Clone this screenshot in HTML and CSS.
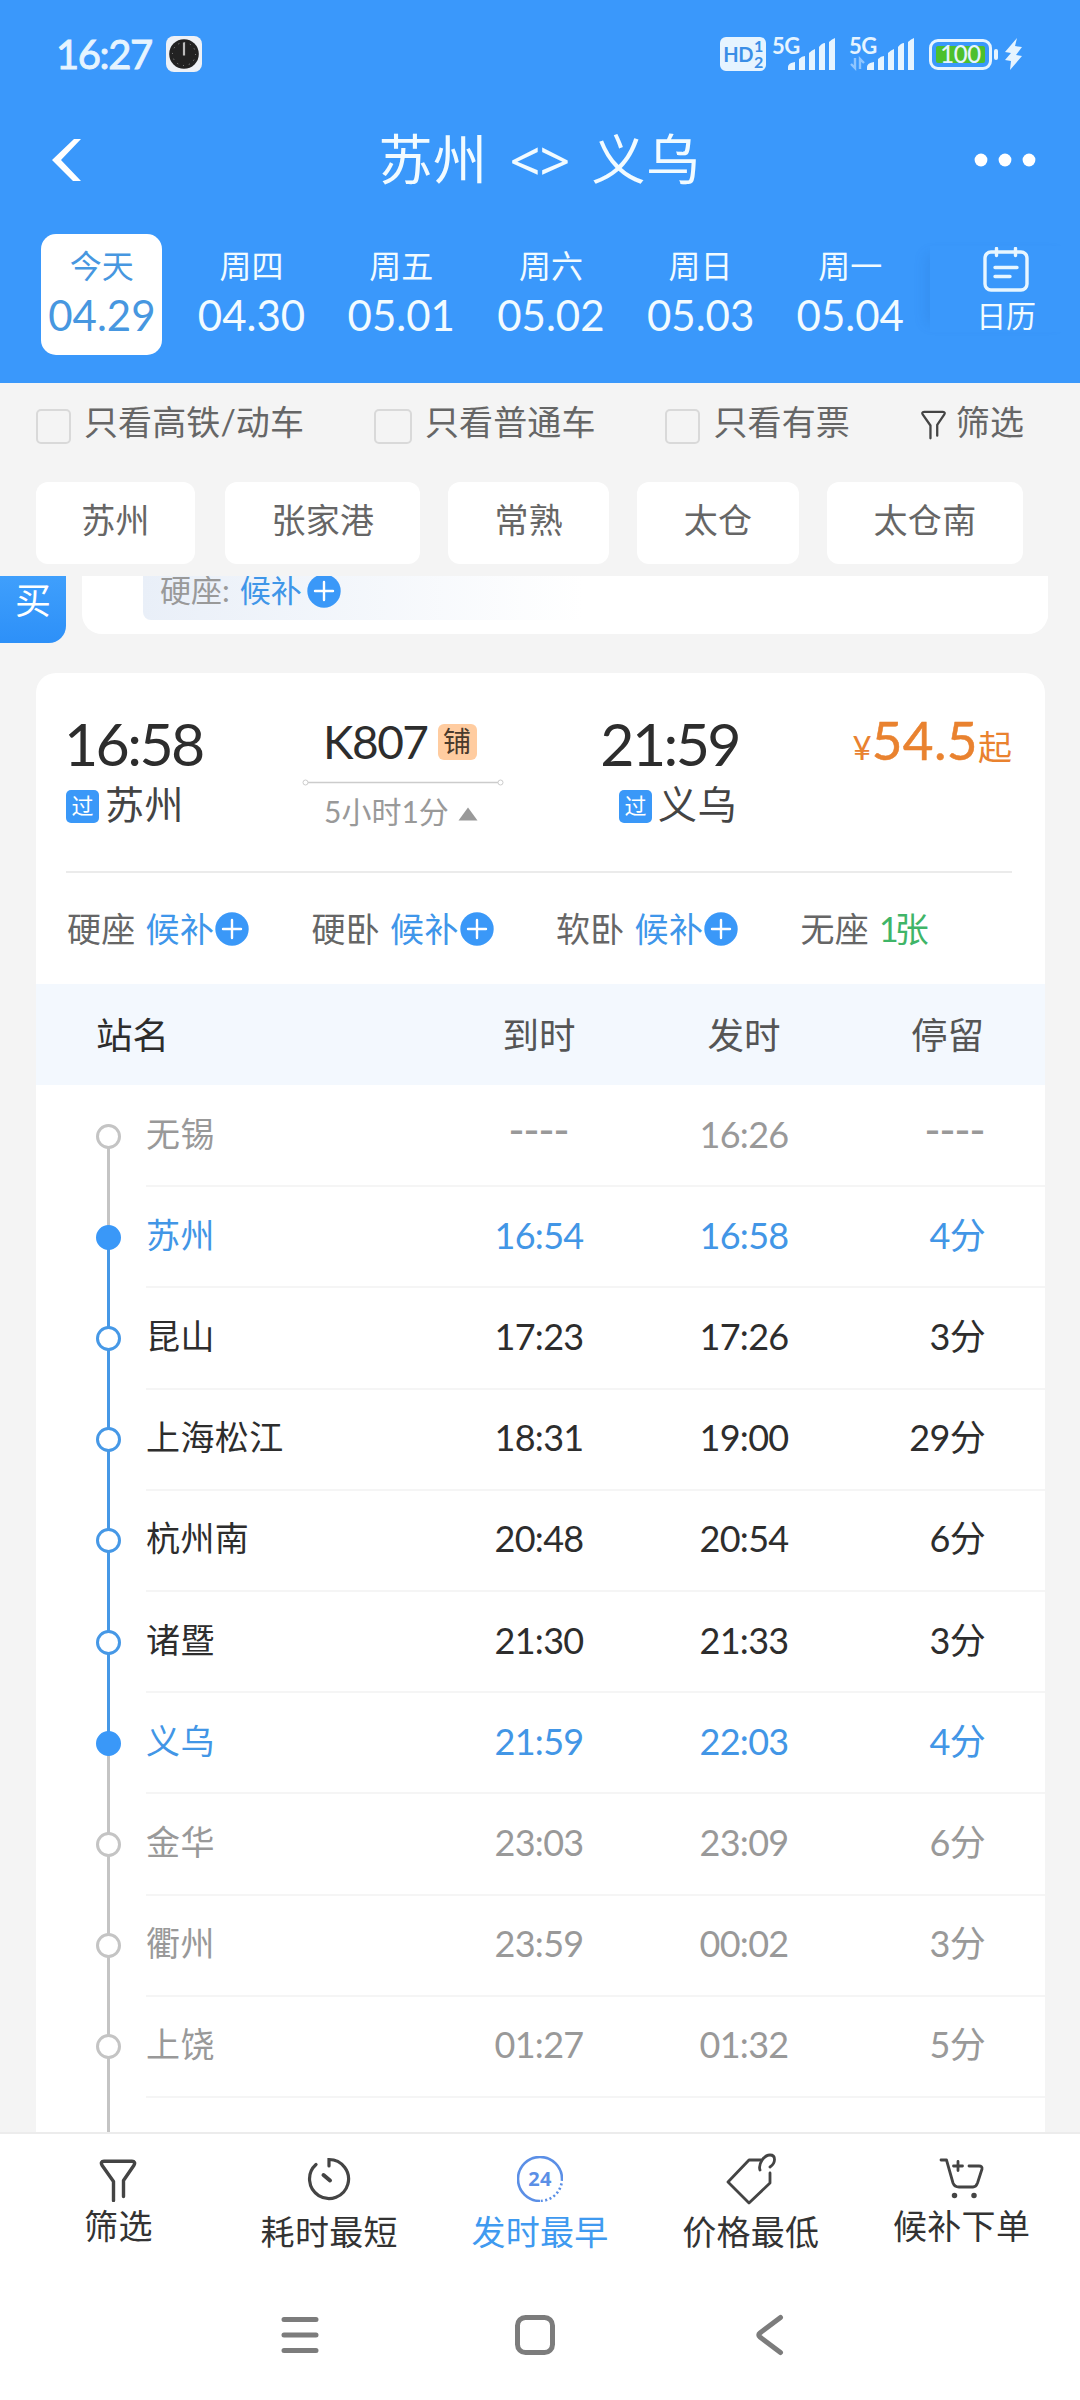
FILE: index.html
```html
<!DOCTYPE html>
<html lang="zh-CN">
<head>
<meta charset="utf-8">
<title>苏州 - 义乌</title>
<link rel="stylesheet" href="styles.css">
</head>
<body>
<svg class="defs" width="0" height="0">
  <symbol id="plus" viewBox="0 0 34 34"><circle cx="17" cy="17" r="16.7" fill="#3a98f8"/><path d="M17 8v18M8 17h18" stroke="#fff" stroke-width="2.4" stroke-linecap="round"/></symbol>
  <symbol id="funnel" viewBox="0 0 40 44"><path d="M15.500 42.500V23.500L4.200 7.500C2.600 5.200 3.400 3.200 6 3.200H34C36.600 3.200 37.400 5.200 35.800 7.500L25.500 22.500V38.500" fill="none" stroke="currentColor" stroke-width="3.400" stroke-linecap="round" stroke-linejoin="round"/></symbol>
</svg>

<header class="header">
  <div class="status">
    <span class="clock">16:27</span>
    <svg class="app-icon" width="36" height="36" viewBox="0 0 36 36"><rect width="36" height="36" rx="8" fill="#eef1f6"/><circle cx="18" cy="18" r="14.800" fill="#222"/><circle cx="18" cy="18" r="11.500" fill="none" stroke="#999" stroke-width="1" stroke-dasharray="1 5"/><path d="M18 6.500v13" stroke="#bbb" stroke-width="2.200"/></svg>
    <span class="hd"><span>HD</span><span class="hd-sim"><i>1</i><i>2</i></span></span>
    <span class="signal"><b>5G</b><svg width="64" height="34" viewBox="0 0 64 34"><g fill="#e6f4ff"><path d="M16 33v-3q0-4 7-5v8zM27 33V22q3-3 6-3v14zM37 33V16q3-3 6-4v21zM47 33V10q3-4 6-4v27zM57 33V5q3-3 6-4v32z"/></g></svg></span>
    <span class="signal second"><b>5G</b><svg width="66" height="34" viewBox="-2 0 66 34"><g fill="#e6f4ff"><path d="M16 33v-3q0-4 7-5v8zM27 33V22q3-3 6-3v14zM37 33V16q3-3 6-4v21zM47 33V10q3-4 6-4v27zM57 33V5q3-3 6-4v32z"/></g><path d="M4 21v10l-4-4M9 32V22l4 4" fill="none" stroke="#8fc6ff" stroke-width="2.400"/></svg></span>
    <span class="battery"><span class="level">100</span></span><span class="battery-tip"></span>
    <svg class="bolt" width="19" height="32" viewBox="0 0 19 32"><path d="M13 0L1 14l6 1-6 7 6 1-1 9L18 18l-6-1 6-8-7-1z" fill="#e6f4ff"/></svg>
  </div>
  <div class="titlebar">
    <svg class="back" width="32" height="44" viewBox="0 0 32 44"><path d="M30 1H23L1 22L22 43H30L10 22Z" fill="#fff"/></svg>
    <h1>苏州 <span>&lt;&gt;</span> 义乌</h1>
    <svg class="more" width="64" height="14" viewBox="0 0 64 14"><g fill="#fff"><circle cx="8" cy="7" r="6.400"/><circle cx="32" cy="7" r="6.400"/><circle cx="56" cy="7" r="6.400"/></g></svg>
  </div>
  <div class="dates">
    <div class="date active"><span>今天</span><b>04.29</b></div>
    <div class="date"><span>周四</span><b>04.30</b></div>
    <div class="date"><span>周五</span><b>05.01</b></div>
    <div class="date"><span>周六</span><b>05.02</b></div>
    <div class="date"><span>周日</span><b>05.03</b></div>
    <div class="date"><span>周一</span><b>05.04</b></div>
    <div class="calendar">
      <svg width="46" height="46" viewBox="0 0 46 46" fill="none" stroke="#e8f6ff" stroke-width="3.400" stroke-linecap="round"><rect x="2" y="5" width="42" height="38" rx="6"/><path d="M13.500 1.500v7M32.500 1.500v7M12 20.500h22M12 29.500h15"/></svg>
      <span>日历</span>
    </div>
  </div>
</header>

<section class="filters">
  <label><i class="box"></i>只看高铁/动车</label>
  <label><i class="box wide"></i>只看普通车</label>
  <label><i class="box"></i>只看有票</label>
  <span class="filter-btn"><svg width="27" height="31"><use href="#funnel"/></svg>筛选</span>
</section>
<section class="chips">
  <span class="chip c1">苏州</span><span class="chip c2">张家港</span><span class="chip c3">常熟</span><span class="chip c4">太仓</span><span class="chip c5">太仓南</span>
</section>

<main class="list">
  <div class="previous">
    <span class="buy">买</span>
    <div class="prev-card"><div class="prev-seat">硬座:<em>候补</em><svg width="34" height="34"><use href="#plus"/></svg></div></div>
  </div>

  <article class="train">
    <div class="summary">
      <div class="end from"><b class="time">16:58</b><span class="place"><i class="pass">过</i>苏州</span></div>
      <div class="number">
        <div class="code">K807<i class="bed">铺</i></div>
        <svg class="track" width="202" height="7" viewBox="0 0 202 7" fill="#fff" stroke="#ccc"><path d="M5 3.500h192" stroke-width="1.500"/><circle cx="3.500" cy="3.500" r="2.500"/><circle cx="198.500" cy="3.500" r="2.500"/></svg>
        <div class="duration">5小时1分<svg width="20" height="14" viewBox="0 0 20 14"><path d="M10 0.500L19.500 13.500H0.500Z" fill="#999"/></svg></div>
      </div>
      <div class="end to"><b class="time">21:59</b><span class="place"><i class="pass">过</i>义乌</span></div>
      <div class="price"><small>¥</small><b>54.5</b><span>起</span></div>
    </div>
    <div class="seats">
      <span>硬座<em>候补</em><svg width="34" height="34"><use href="#plus"/></svg></span>
      <span>硬卧<em>候补</em><svg width="34" height="34"><use href="#plus"/></svg></span>
      <span>软卧<em>候补</em><svg width="34" height="34"><use href="#plus"/></svg></span>
      <span>无座<em class="left">1张</em></span>
    </div>
    <div class="row head"><span class="station">站名</span><span>到时</span><span>发时</span><span class="stay">停留</span></div>
    <div class="stops">
      <div class="row stop out first"><i class="dot"></i><span class="station">无锡</span><span class="dash">----</span><span>16:26</span><span class="stay dash">----</span></div>
      <div class="row stop mine board"><i class="dot"></i><span class="station">苏州</span><span>16:54</span><span>16:58</span><span class="stay">4分</span></div>
      <div class="row stop"><i class="dot"></i><span class="station">昆山</span><span>17:23</span><span>17:26</span><span class="stay">3分</span></div>
      <div class="row stop"><i class="dot"></i><span class="station">上海松江</span><span>18:31</span><span>19:00</span><span class="stay">29分</span></div>
      <div class="row stop"><i class="dot"></i><span class="station">杭州南</span><span>20:48</span><span>20:54</span><span class="stay">6分</span></div>
      <div class="row stop"><i class="dot"></i><span class="station">诸暨</span><span>21:30</span><span>21:33</span><span class="stay">3分</span></div>
      <div class="row stop mine leave"><i class="dot"></i><span class="station">义乌</span><span>21:59</span><span>22:03</span><span class="stay">4分</span></div>
      <div class="row stop out"><i class="dot"></i><span class="station">金华</span><span>23:03</span><span>23:09</span><span class="stay">6分</span></div>
      <div class="row stop out"><i class="dot"></i><span class="station">衢州</span><span>23:59</span><span>00:02</span><span class="stay">3分</span></div>
      <div class="row stop out"><i class="dot"></i><span class="station">上饶</span><span>01:27</span><span>01:32</span><span class="stay">5分</span></div>
      <div class="row stop out tail"></div>
    </div>
  </article>
</main>

<nav class="tabs">
  <div class="tab raised"><svg width="40" height="44"><use href="#funnel"/></svg><span>筛选</span></div>
  <div class="tab"><svg width="46" height="46" viewBox="0 0 46 46" fill="none" stroke="currentColor" stroke-width="3.200" stroke-linecap="round"><path d="M10 8.500A19.500 19.500 0 1 0 23 3.500V10"/><path d="M17.500 19L24 24.500" stroke-width="4"/></svg><span>耗时最短</span></div>
  <div class="tab current"><svg width="46" height="46" viewBox="0 0 46 46" fill="none" stroke="#5b8fe6" stroke-width="2.600"><path d="M23 45A22 22 0 1 1 45 23"/><path d="M45 23A22 22 0 0 1 23 45" stroke-dasharray="2 2.500"/><text x="23" y="29.500" text-anchor="middle" class="num24">24</text></svg><span>发时最早</span></div>
  <div class="tab"><svg class="tag" width="52" height="52" viewBox="0 0 52 52" fill="none" stroke="currentColor" stroke-width="2.800" stroke-linecap="round" stroke-linejoin="round"><path d="M36 7H24L3 29L24 50L45 30V20"/><path d="M35 17C33 11 39 2 45 2C51 2 51 10 45 14"/></svg><span>价格最低</span></div>
  <div class="tab raised"><svg width="46" height="42" viewBox="0 0 46 42" fill="none" stroke="currentColor" stroke-width="2.800" stroke-linecap="round" stroke-linejoin="round"><path d="M2 2H7.500L14 25Q15.500 29 20 29H34Q37 29 38.500 25L43 11Q43.500 8 40 8H30M19 3.500v9M14.500 8h9"/><circle cx="15.500" cy="37.500" r="2" fill="currentColor" stroke-width="1.500"/><circle cx="35" cy="37.500" r="2" fill="currentColor" stroke-width="1.500"/></svg><span>候补下单</span></div>
</nav>
<footer class="sysnav">
  <svg width="40" height="42" viewBox="0 0 40 42"><path d="M4 5.500h32M4 21h32M4 36.500h32"/></svg>
  <svg width="42" height="42" viewBox="0 0 42 42"><rect x="3.500" y="3.500" width="35" height="35" rx="8"/></svg>
  <svg width="30" height="42" viewBox="0 0 30 42"><path d="M25.500 3.500L5 19Q2.500 21 5 23L25.500 38.500"/></svg>
</footer>
</body>
</html>
```
FILE: styles.css
```css
* { box-sizing: border-box; }
body {
  margin: 0;
  width: 1080px;
  height: 2400px;
  overflow: hidden;
  display: flex;
  flex-direction: column;
  background: #f4f4f4;
  color: #333;
  font-family: Lato, "Noto Sans CJK SC", sans-serif;
  font-size: 34px;
  line-height: 1;
}
h1, b { font-weight: 400; margin: 0; }
i, em { font-style: normal; }
svg { flex: none; display: block; }
.defs { position: absolute; }

/* header */
.header { height: 383px; flex: none; background: #3a98fb; color: #f2fbff; }
.status { height: 108px; padding-left: 56px; display: flex; align-items: center; color: #e6f4ff; }
.clock { width: 110px; font-size: 40px; font-weight: 400; -webkit-text-stroke: 0.9px; letter-spacing: -1.4px; }
.hd { margin-left: 518px; width: 46px; height: 34px; border-radius: 6px; background: #e6f4ff; color: #3a8ee6; display: flex; align-items: center; justify-content: center; font-size: 20px; font-weight: 700; letter-spacing: -0.5px; }
.hd-sim { display: flex; flex-direction: column; font-size: 16px; margin-left: 1px; }
.signal { display: flex; position: relative; margin-left: 6px; }
.signal.second { margin-left: 13px; }
.signal b { position: absolute; left: 0; top: -2px; font-size: 22px; font-weight: 700; letter-spacing: -0.5px; }
.battery { margin-left: 14px; width: 63px; height: 31px; border: 3px solid #e6f4ff; border-radius: 9px; padding: 4px; display: flex; }
.level { flex: 1; background: #4cc02c; border-radius: 2px; font-size: 24px; font-weight: 500; line-height: 16px; text-align: center; letter-spacing: -0.5px; }
.battery-tip { width: 4px; height: 11px; margin: 0 6px 0 2px; border-radius: 2px; background: #e6f4ff; }
.titlebar { height: 104px; padding: 0 43px 0 51px; display: flex; align-items: center; justify-content: space-between; }
.titlebar h1 { font-size: 54px; display: flex; align-items: center; gap: 22px; margin: 0 -23px 0 0; letter-spacing: 0.5px; }
.titlebar h1 span { font-family: "Noto Sans", sans-serif; font-size: 54px; letter-spacing: -1px; }
.dates { padding: 22px 0 0 27px; display: flex; }
.date { width: 149.700px; height: 121px; flex: none; display: flex; flex-direction: column; align-items: center; padding-top: 16px; gap: 12px; }
.date span { font-size: 32px; }
.date b { font-size: 42px; letter-spacing: 0; }
.date.active { width: 121px; margin: 0 14.350px; border-radius: 15px; background: #fff; color: #4797e0; }
.calendar { margin: 12px 0 0 5px; padding: 1px 0 0 4px; width: 148px; height: 86px; display: flex; flex-direction: column; align-items: center; gap: 7px; box-shadow: -12px 0 12px -8px rgba(30, 90, 180, .14); font-size: 30px; }

/* filters */
.filters { height: 99px; flex: none; padding: 0 56px 22px 36px; display: flex; align-items: center; justify-content: space-between; color: #666; font-size: 34px; }
.filters label, .filter-btn { display: flex; align-items: center; letter-spacing: 0.1px; }
.box { width: 35px; height: 35px; margin: 9px 13px 0 0; border: 2.500px solid #d9d9d9; border-radius: 5px; }
.box.wide { width: 38px; }
.filter-btn svg { margin: 6px 9px 0 0; color: #444; }
.chips { height: 94px; flex: none; padding: 0 57px 12px 36px; display: flex; justify-content: space-between; color: #666; }
.chip { height: 82px; border-radius: 12px; background: #fff; display: flex; align-items: center; justify-content: center; padding-bottom: 6px; letter-spacing: 0.3px; }
.c1 { width: 159px; margin-right: 2.500px; } .c2 { width: 195px; } .c3 { width: 161px; } .c4 { width: 162px; } .c5 { width: 196px; }

/* list */
.list { height: 1556px; flex: none; overflow: hidden; }
.previous { display: flex; gap: 16px; height: 67px; margin-bottom: 30px; }
.buy { width: 66px; border-radius: 0 0 17px 0; background: linear-gradient(#3f9ffc, #2d90f8); color: #fff; font-size: 36px; padding: 6px 0 0 15px; }
.prev-card { width: 966px; height: 58px; padding: 0 0 14px 61px; border-radius: 0 0 20px 20px; background: #fff; overflow: hidden; }
.prev-seat { height: 44px; padding: 0 0 14px 17px; border-radius: 0 0 0 8px; background: linear-gradient(90deg, #e9eff8, #fff 440px); display: flex; align-items: flex-end; font-size: 31px; color: #999; }
.prev-seat em { color: #3f96e8; margin: 0 5px 0 10px; }
.prev-seat svg { margin-bottom: -2px; }
.train { width: 1009px; margin-left: 36px; background: #fff; border-radius: 20px 20px 0 0; }
.summary { height: 200px; margin: 0 33px 0 30px; padding-top: 41px; border-bottom: 2px solid #ebebeb; display: flex; }
.end { display: flex; flex-direction: column; gap: 12px; }
.from { width: 236px; }
.from .time { margin-left: -2px; }
.to { width: 132px; margin: 0 3px 0 101px; align-items: flex-end; }
.to .time { margin-right: -2px; }
.time { font-size: 59px; letter-spacing: -2.600px; color: #2d2d2d; }
.place { display: flex; align-items: center; font-size: 39px; color: #444; letter-spacing: 0.5px; }
.pass { width: 33px; height: 33px; margin: 3px 6px 0 0; border-radius: 5px; background: #3a98f8; color: #fff; font-size: 22px; line-height: 31px; text-align: center; letter-spacing: 0; }
.number { width: 202px; padding: 5px 0 0; }
.code { display: flex; align-items: center; padding-left: 21px; font-size: 46px; letter-spacing: -1.500px; color: #2d2d2d; }
.bed { width: 39px; height: 36px; margin-left: 10px; border-radius: 6px; background: #ffcca0; color: #4a3a2c; font-size: 28px; line-height: 34px; text-align: center; letter-spacing: 0; }
.track { margin-top: 14px; }
.duration { display: flex; align-items: center; padding: 10px 0 0 22px; font-size: 30px; color: #999; }
.duration svg { margin: 6px 0 0 9px; }
.price { flex: 1; display: flex; align-items: baseline; justify-content: flex-end; color: #e9822f; margin-top: -1px; }
.price small { font-size: 33px; }
.price b { font-size: 53px; letter-spacing: 0.4px; -webkit-text-stroke: 0.5px; }
.price span { font-size: 34px; }
.seats { height: 111px; padding: 0 0 0 31px; display: flex; align-items: center; color: #666; font-size: 34px; }
.seats > span { width: 244.500px; display: flex; align-items: center; letter-spacing: 0.3px; }
.seats em { margin-left: 10px; color: #3f96ea; }
.seats em.left { color: #3fb568; letter-spacing: -4px; }
.seats svg { margin-left: 1px; }
.row { display: grid; grid-template-columns: 400px 206px 204px 138px; align-items: center; text-align: center; }
.head { height: 101px; padding-top: 2px; background: #f3f8fe; color: #555; font-size: 36.500px; }
.head .station { text-align: left; padding-left: 60px; color: #2d2d2d; }
.stay { text-align: right; }
.stop { position: relative; height: 101.200px; grid-template-columns: 72px 328px 206px 204px 139px; color: #2d2d2d; font-size: 36px; letter-spacing: -0.700px; }
.stop > span { padding-bottom: 4px; }
.stop .station { text-align: left; padding-left: 38px; font-size: 34px; letter-spacing: 0.400px; }
.stop .dash { font-family: "Liberation Sans", sans-serif; font-size: 45px; letter-spacing: 0; padding-bottom: 14px; }
.dot { justify-self: end; width: 25px; height: 25px; margin: 1px -13px 0 0; border: 3px solid #4698e6; border-radius: 50%; background: #fff; z-index: 1; }
.stop::before { content: ""; position: absolute; left: 71px; width: 3px; top: 0; height: 100%; background: #4698e6; }
.stop::after { content: ""; position: absolute; left: 110px; right: 0; bottom: -1px; height: 2px; background: #f5f5f5; }
.mine { color: #4296e6; }
.mine .dot { background: #3a98f8; border-color: #3a98f8; }
.out { color: #999; }
.out .dot { border-color: #c4c4c4; }
.out::before { background: #c4c4c4; }
.first::before { top: 50%; height: 50%; }
.board::before { background: linear-gradient(#c4c4c4 50%, #4698e6 50%); }
.leave::before { background: linear-gradient(#4698e6 50%, #c4c4c4 50%); }

/* bottom */
.tabs { height: 138px; flex: none; padding: 22px 13px 0; border-top: 2px solid #ececec; background: #fff; display: flex; }
.tab { width: 211px; height: 93px; display: flex; flex-direction: column; align-items: center; justify-content: space-between; font-size: 34px; letter-spacing: 0.3px; color: #333; }
.tab svg { color: #444; }
.tab.raised { height: 87px; padding-top: 2px; }
.tab.current { color: #3f9af0; }
.tag { margin-top: -3px; }
.num24 { font: 700 20px "Open Sans", sans-serif; fill: #5b8fe6; stroke: none; }
.sysnav { flex: 1; padding: 44px 0 0 280px; background: #fff; display: flex; align-items: flex-start; }
.sysnav svg { fill: none; stroke: #7c7c7c; stroke-width: 5; stroke-linecap: round; margin-right: 194px; }
.sysnav svg:nth-child(2) { margin-right: 199px; }
```
